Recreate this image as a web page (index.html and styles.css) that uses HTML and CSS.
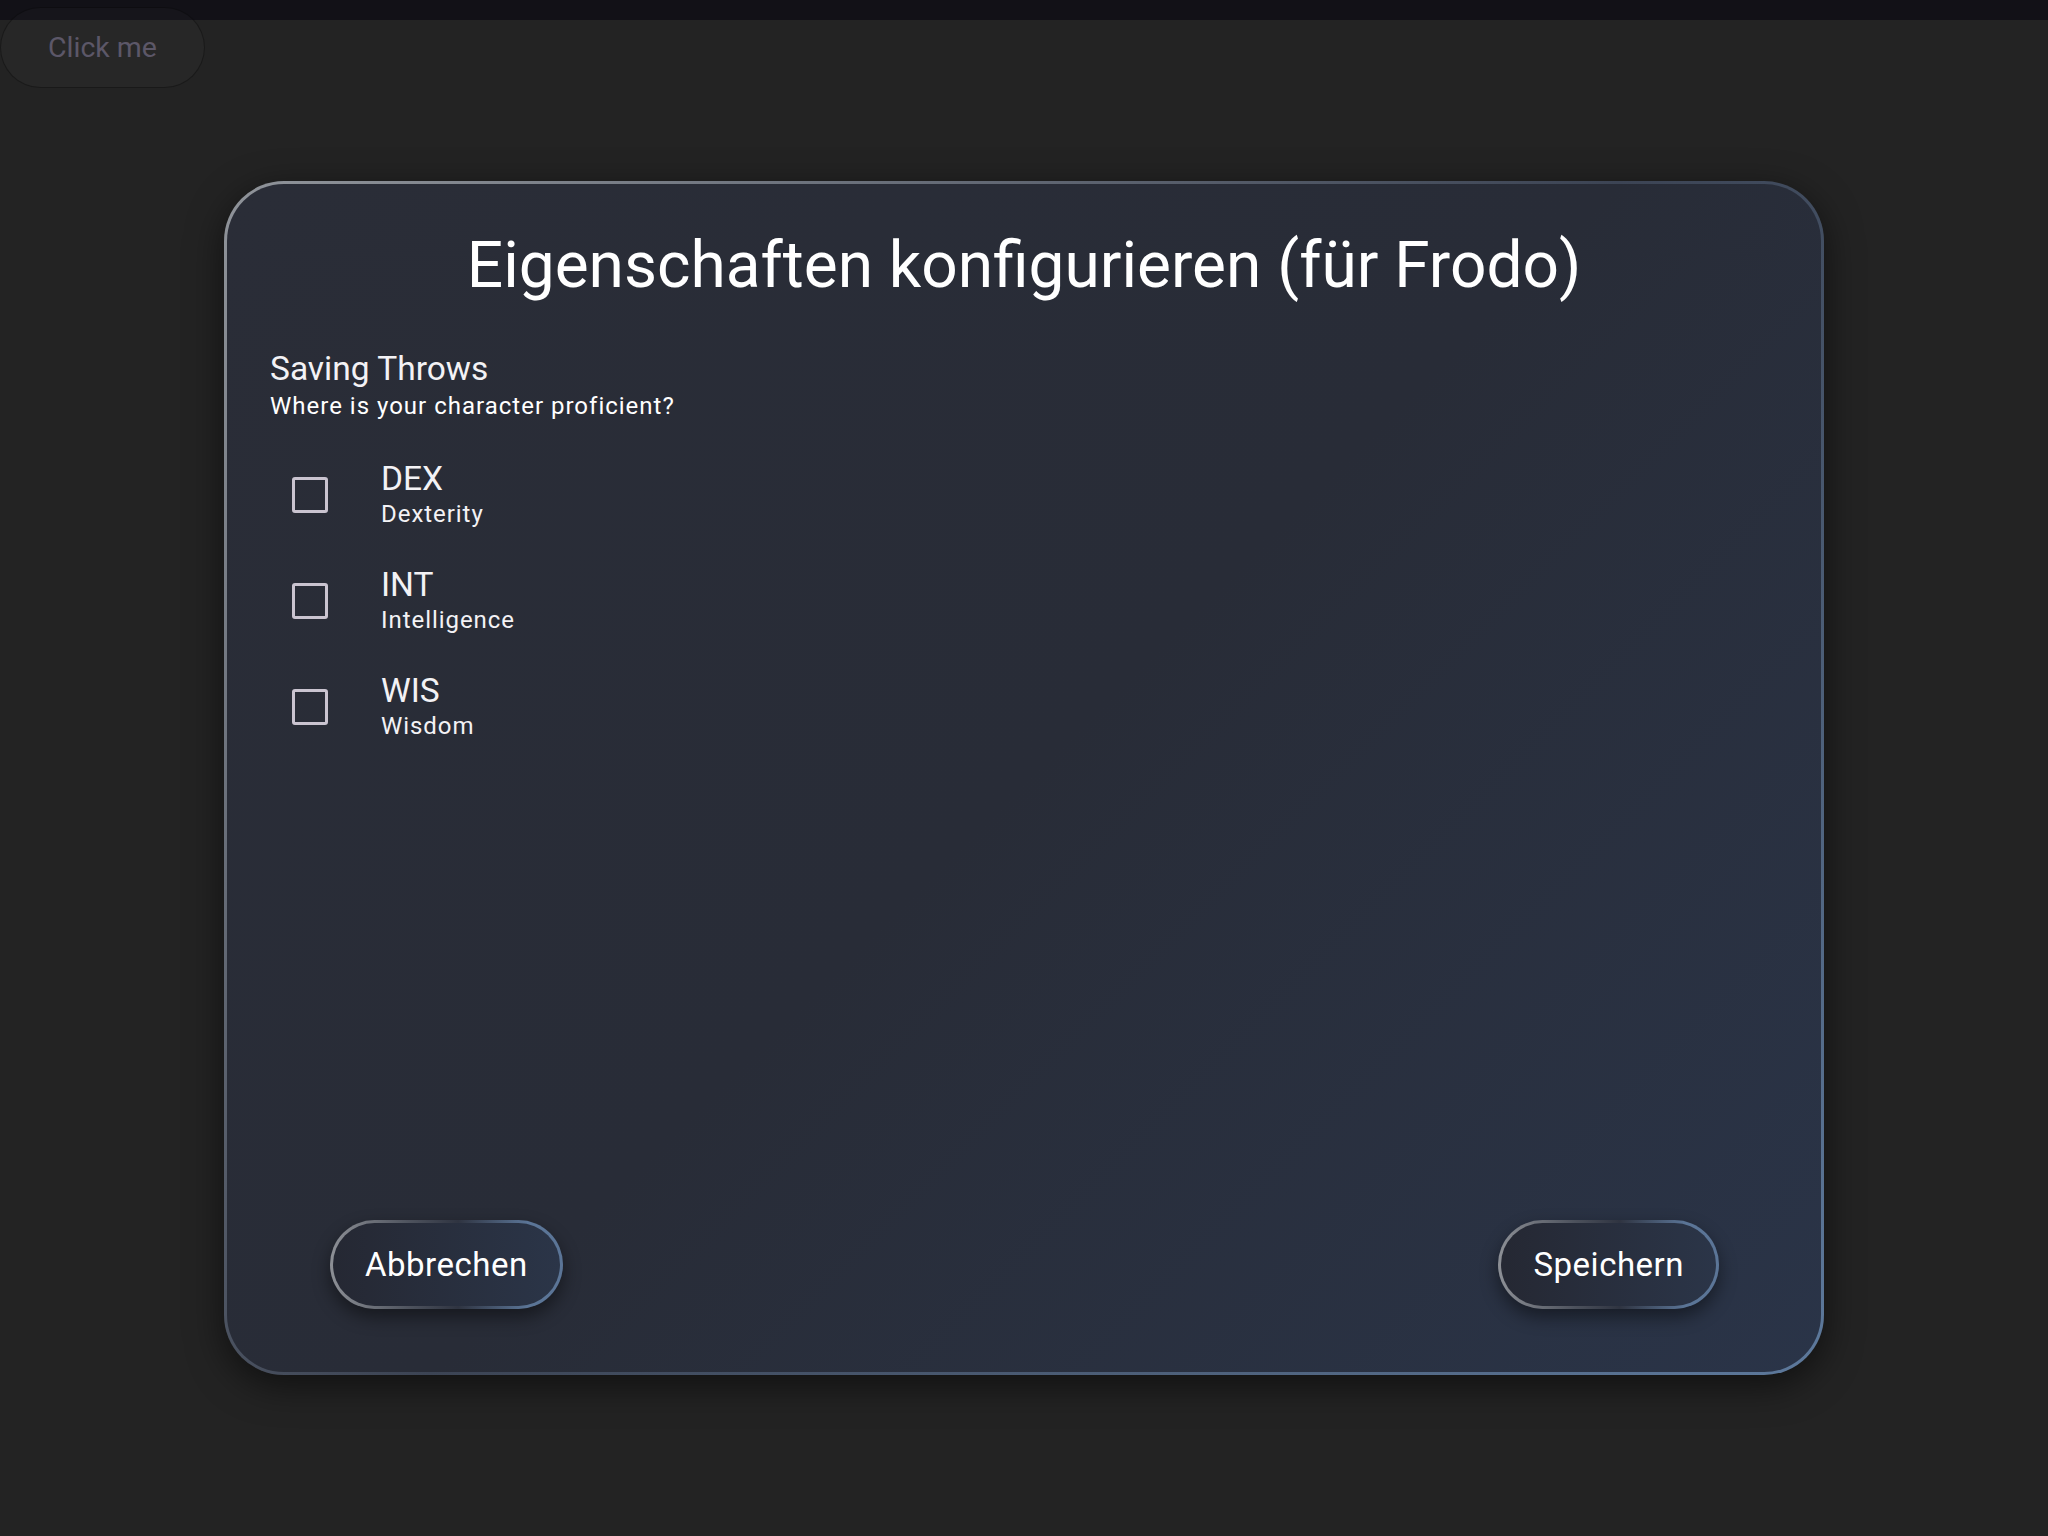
FILE: index.html
```html
<!DOCTYPE html>
<html lang="de">
<head>
<meta charset="utf-8">
<title>Eigenschaften konfigurieren</title>
<link rel="stylesheet" href="styles.css">
</head>
<body>
  <div class="topbar"></div>
  <button class="click-me" type="button">Click me</button>
  <main class="stage">
    <section class="dialog">
      <h1 class="dialog-title">Eigenschaften konfigurieren (für Frodo)</h1>
      <div class="section-head">
        <h2 class="section-title">Saving Throws</h2>
        <p class="section-sub">Where is your character proficient?</p>
      </div>
      <ul class="options">
        <li class="option">
          <span class="checkbox"></span>
          <div class="option-text">
            <span class="option-title">DEX</span>
            <span class="option-sub">Dexterity</span>
          </div>
        </li>
        <li class="option">
          <span class="checkbox"></span>
          <div class="option-text">
            <span class="option-title">INT</span>
            <span class="option-sub">Intelligence</span>
          </div>
        </li>
        <li class="option">
          <span class="checkbox"></span>
          <div class="option-text">
            <span class="option-title">WIS</span>
            <span class="option-sub">Wisdom</span>
          </div>
        </li>
      </ul>
      <div class="actions">
        <button class="action" type="button">Abbrechen</button>
        <button class="action" type="button">Speichern</button>
      </div>
    </section>
  </main>
</body>
</html>
```
FILE: styles.css
```css
html, body {
  margin: 0;
  padding: 0;
}

body {
  width: 2048px;
  height: 1536px;
  overflow: hidden;
  background: #232323;
  font-family: Roboto, "Liberation Sans", sans-serif;
  color: #ffffff;
  position: relative;
}

.topbar {
  height: 20px;
  background: #121117;
}

.click-me {
  position: absolute;
  left: 0;
  top: 7px;
  width: 205px;
  height: 81px;
  box-sizing: border-box;
  border-radius: 41px;
  border: 1px solid rgba(0, 0, 0, 0.35);
  background: rgba(255, 255, 255, 0.018);
  color: #5c5768;
  font-family: Roboto, "Liberation Sans", sans-serif;
  font-size: 28.5px;
  font-weight: 400;
  padding: 0;
}

.stage {
  height: 1516px;
  display: flex;
  align-items: center;
  justify-content: center;
}

.dialog {
  width: 1600px;
  height: 1194px;
  box-sizing: border-box;
  border: 3px solid transparent;
  border-radius: 60px;
  background:
    linear-gradient(135deg, #2a2d37 0%, #282c37 50%, #2a3448 100%) padding-box,
    linear-gradient(135deg, #90949a 0%, #3c4454 50%, #5d799c 100%) border-box;
  box-shadow: 0 10px 36px rgba(0, 0, 0, 0.55);
  padding: 44px 43px 63px;
  display: flex;
  flex-direction: column;
}

.dialog-title {
  margin: 0;
  text-align: center;
  font-size: 64px;
  line-height: 76px;
  font-weight: 400;
  color: #ffffff;
}

.section-head {
  margin-top: 48px;
}

.section-title {
  margin: 0;
  font-size: 33.5px;
  line-height: 34px;
  font-weight: 400;
  color: #f3f2f5;
}

.section-sub {
  margin: 6px 0 0;
  font-size: 24px;
  line-height: 28px;
  letter-spacing: 1px;
  color: #ffffff;
}

.options {
  list-style: none;
  margin: 22px 0 0;
  padding: 0;
}

.option {
  height: 106px;
  display: flex;
  align-items: center;
  padding-left: 22px;
}

.checkbox {
  width: 36px;
  height: 36px;
  box-sizing: border-box;
  border: 3px solid #cac4d0;
  border-radius: 3px;
  margin-right: 53px;
  flex: none;
}

.option-text {
  display: flex;
  flex-direction: column;
}

.option-title {
  font-size: 33.5px;
  line-height: 38px;
  color: #f3f2f5;
}

.option-sub {
  font-size: 24px;
  line-height: 32px;
  letter-spacing: 0.95px;
  color: #f3f2f5;
}

.actions {
  margin-top: auto;
  display: flex;
  justify-content: space-between;
  padding: 0 59px 0 60px;
}

.action {
  height: 89px;
  box-sizing: border-box;
  padding: 0 32px;
  border: 3px solid transparent;
  border-radius: 45px;
  background:
    linear-gradient(90deg, #252833 0%, #2b3548 100%) padding-box,
    linear-gradient(90deg, #8d9096 0%, #4c515c 35%, #2f3441 55%, #5b7597 85%) border-box;
  color: #ffffff;
  font-family: Roboto, "Liberation Sans", sans-serif;
  font-size: 33px;
  font-weight: 400;
  letter-spacing: 0.5px;
  box-shadow: 0 8px 18px rgba(0, 0, 0, 0.45);
}
```
